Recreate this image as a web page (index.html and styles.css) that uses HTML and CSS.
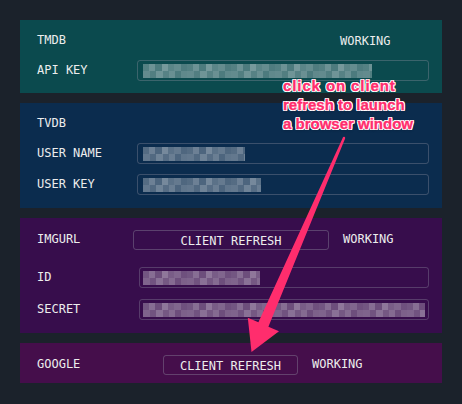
FILE: index.html
```html
<!DOCTYPE html>
<html>
<head>
<meta charset="utf-8">
<link rel="stylesheet" href="styles.css">
</head>
<body>
<main class="page">
  <section class="panel tmdb">
    <div class="row head head-tmdb">
      <span class="label">TMDB</span>
      <span class="status">WORKING</span>
    </div>
    <div class="row field">
      <span class="label">API KEY</span>
      <div class="input"><div class="blur" style="width:229px"></div></div>
    </div>
  </section>

  <section class="panel tvdb">
    <div class="row head">
      <span class="label">TVDB</span>
    </div>
    <div class="row field">
      <span class="label">USER NAME</span>
      <div class="input"><div class="blur" style="width:102px"></div></div>
    </div>
    <div class="row field">
      <span class="label">USER KEY</span>
      <div class="input"><div class="blur" style="width:118px"></div></div>
    </div>
  </section>

  <section class="panel imgurl">
    <div class="row head head-btn head-imgurl">
      <span class="label">IMGURL</span>
      <button class="btn">CLIENT REFRESH</button>
      <span class="status">WORKING</span>
    </div>
    <div class="row field field-wide">
      <span class="label">ID</span>
      <div class="input"><div class="blur" style="width:117px"></div></div>
    </div>
    <div class="row field field-wide">
      <span class="label">SECRET</span>
      <div class="input"><div class="blur" style="width:282px"></div></div>
    </div>
  </section>

  <section class="panel google">
    <div class="row head head-btn head-google">
      <span class="label">GOOGLE</span>
      <button class="btn">CLIENT REFRESH</button>
      <span class="status">WORKING</span>
    </div>
  </section>
</main>

<p class="note"><span class="note-first">click on client</span><br>refresh to launch<br>a browser window</p>

<svg class="arrow" width="462" height="404" viewBox="0 0 462 404">
  <polygon points="345.1,138.5 268.4,326.7 279,331.2 251.5,352 247.8,317.8 258.4,322.3 342.9,137.5" fill="#ff2d6d"/>
  <circle cx="344" cy="138" r="1.2" fill="#ff2d6d"/>
</svg>
</body>
</html>
```

FILE: styles.css
```css
html, body {
  margin: 0;
  padding: 0;
}

body {
  width: 462px;
  height: 404px;
  overflow: hidden;
  position: relative;
  background: #1b222b;
  font-family: "DejaVu Sans Mono", "Liberation Mono", monospace;
  font-size: 12px;
  color: #ededed;
}

.page {
  padding: 20px;
  display: flex;
  flex-direction: column;
  gap: 10px;
}

.panel {
  display: flex;
  flex-direction: column;
  padding: 10px 13px 12px 17px;
}

.tmdb { background: #0b4a4e; }
.tvdb { background: #0b2c4e; padding-bottom: 13px; }
.imgurl { background: #370d4c; padding-top: 12px; padding-bottom: 13px; }
.google { background: #450e4b; padding-top: 12px; padding-bottom: 8px; }

.row {
  display: grid;
  align-items: center;
  height: 21px;
}

.label {
  white-space: nowrap;
  padding-bottom: 2px;
}

.head-tmdb {
  grid-template-columns: 303px auto;
}

.tmdb .field,
.tvdb .field {
  margin-top: 9px;
}

.tvdb .field + .field {
  margin-top: 10px;
}

.field {
  grid-template-columns: 100px 1fr;
}

.field-wide {
  grid-template-columns: 102px 1fr;
}

.field-wide .input {
  padding: 0 3px;
}

.imgurl .field { margin-top: 17px; }
.imgurl .field + .field { margin-top: 11px; }

.head-btn {
  height: 20px;
  column-gap: 14px;
}

.head-btn .label,
.head-btn .status {
  padding-bottom: 3px;
}

.head-imgurl { grid-template-columns: 82px 196px auto; }
.head-google { grid-template-columns: 112px 135px auto; }

.btn {
  height: 20px;
  box-sizing: border-box;
  margin: 0;
  padding: 1px 0 0;
  background: transparent;
  border: 1px solid rgba(150, 150, 165, 0.38);
  border-radius: 3px;
  color: #ededed;
  font: inherit;
  line-height: 16px;
  text-align: center;
}

.input {
  height: 21px;
  min-width: 0;
  box-sizing: border-box;
  border: 1px solid rgba(150, 150, 165, 0.35);
  border-radius: 3px;
  padding: 0 5px;
  display: flex;
  align-items: center;
  overflow: hidden;
}

.blur {
  height: 14px;
  flex-shrink: 1;
  min-width: 0;
  background-repeat: no-repeat;
  background-size: 100% 7px;
  background-position: 0 0, 0 7px;
  background-image:
    repeating-linear-gradient(90deg,
      rgba(255,255,255,.30) 0 6px,
      rgba(255,255,255,.40) 6px 12px,
      rgba(255,255,255,.27) 12px 19px,
      rgba(255,255,255,.44) 19px 25px,
      rgba(255,255,255,.33) 25px 31px,
      rgba(255,255,255,.37) 31px 38px,
      rgba(255,255,255,.28) 38px 44px),
    repeating-linear-gradient(90deg,
      rgba(255,255,255,.36) 0 7px,
      rgba(255,255,255,.29) 7px 13px,
      rgba(255,255,255,.41) 13px 20px,
      rgba(255,255,255,.31) 20px 26px,
      rgba(255,255,255,.39) 26px 32px,
      rgba(255,255,255,.27) 32px 38px,
      rgba(255,255,255,.35) 38px 44px);
}

.note {
  position: absolute;
  left: 283px;
  top: 76px;
  margin: 0;
  font-family: "Liberation Sans", Arial, sans-serif;
  font-weight: bold;
  font-size: 15px;
  line-height: 19px;
  color: #ff2d6d;
  -webkit-text-stroke: 0.35px #ff2d6d;
  text-shadow:
    1px 0 0 #fff, -1px 0 0 #fff, 0 1px 0 #fff, 0 -1px 0 #fff,
    1px 1px 0 #fff, -1px -1px 0 #fff, 1px -1px 0 #fff, -1px 1px 0 #fff,
    0 1px 3px rgba(0,0,0,0.35);
}

.note-first {
  letter-spacing: 0.9px;
}

.arrow {
  position: absolute;
  left: 0;
  top: 0;
  pointer-events: none;
}
```
